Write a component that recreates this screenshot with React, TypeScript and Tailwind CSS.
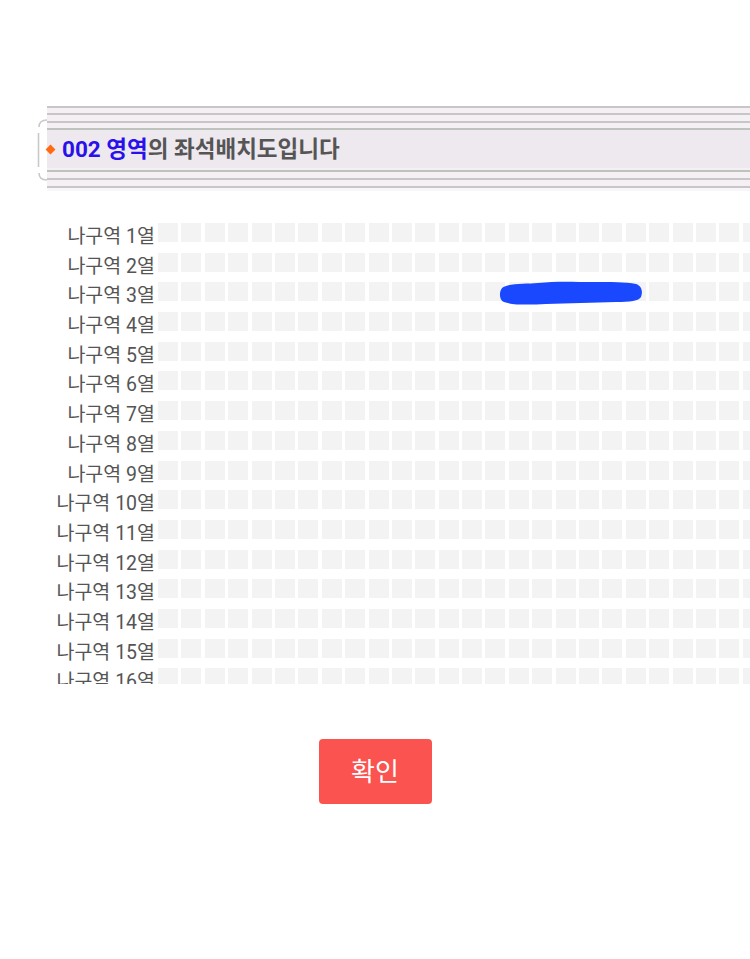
import React from "react";

const ROWS = Array.from({ length: 16 }, (_, i) => i + 1);
const COLS = Array.from({ length: 28 }, (_, i) => i);

function Stripe({ tone = "gray" }: { tone?: "gray" | "green" }) {
  return (
    <div
      className={`h-[2px] ${tone === "green" ? "bg-[#bfc3bd]" : "bg-[#c9c6c9]"}`}
    />
  );
}

function Gap({ h }: { h: string }) {
  return <div className={`${h} bg-[#f4f0f4]`} />;
}

export default function App() {
  return (
    <div className="w-[750px] h-[959px] bg-white overflow-hidden font-[Roboto,'Noto_Sans_CJK_KR',sans-serif]">
      {/* section title bar */}
      <div className="flex pt-[106px] pl-[36px]">
        <svg width="11" height="84" viewBox="0 0 11 84" className="shrink-0">
          <path d="M11 14 Q3 14 3 21" fill="none" stroke="#c9c9c9" strokeWidth="1.6" />
          <path d="M2.5 27 L2.5 61" fill="none" stroke="#c9c9c9" strokeWidth="1.6" />
          <path d="M3 67 Q3 74 11 74" fill="none" stroke="#c9c9c9" strokeWidth="1.6" />
        </svg>
        <div className="flex-1 flex flex-col">
          <Stripe />
          <Gap h="h-[5px]" />
          <Stripe />
          <Gap h="h-[6px]" />
          <Stripe />
          <Gap h="h-[5px]" />
          <Stripe tone="green" />
          <div className="h-[38px] bg-[#ede9ee] flex items-center">
            <span className="w-[7px] h-[7px] bg-[#ff6a13] rotate-45 mr-[8px]" />
            <span className="text-[22.5px] font-bold leading-none text-[#555]">
              <span className="text-[#2a10ea]">002 영역</span>의 좌석배치도입니다
            </span>
          </div>
          <Gap h="h-[2px]" />
          <Stripe tone="green" />
          <Gap h="h-[6px]" />
          <Stripe />
          <Gap h="h-[6px]" />
          <Stripe />
          <div className="h-[3px] bg-[#f8f6f8]" />
        </div>
      </div>

      {/* seat map */}
      <div className="relative mt-[32px] h-[461px] overflow-hidden">
        <div className="flex flex-col">
          {ROWS.map((r) => (
            <div key={r} className="flex items-start h-[29.7px] shrink-0">
              <div className="w-[155px] shrink-0 text-right text-[19.5px] leading-[20px] mt-[4px] text-[#555] whitespace-nowrap">
                나구역 {r}열
              </div>
              <div className="flex gap-[3.4px] ml-[3px] shrink-0">
                {COLS.map((c) => (
                  <div key={c} className="w-[20px] h-[19px] bg-[#f3f3f3] shrink-0" />
                ))}
              </div>
            </div>
          ))}
        </div>
        {/* marker scribble */}
        <svg
          width="146"
          height="28"
          viewBox="0 0 146 28"
          className="absolute left-[498px] top-[56px]"
        >
          <path
            d="M4 9 C10 4 28 5 40 4 C58 2 76 3 96 3 C112 3 128 3 138 5 C144 7 145 13 143 18 C141 22 132 23 118 23 C96 24 70 24 48 25 C30 26 14 26 6 23 C1 21 1 13 4 9 Z"
            fill="#1a48ff"
          />
        </svg>
      </div>

      <div className="flex justify-center mt-[55px]">
        <button className="w-[113px] h-[65px] rounded-[4px] bg-[#fb5350] text-white text-[26px] leading-none">
          확인
        </button>
      </div>
    </div>
  );
}
